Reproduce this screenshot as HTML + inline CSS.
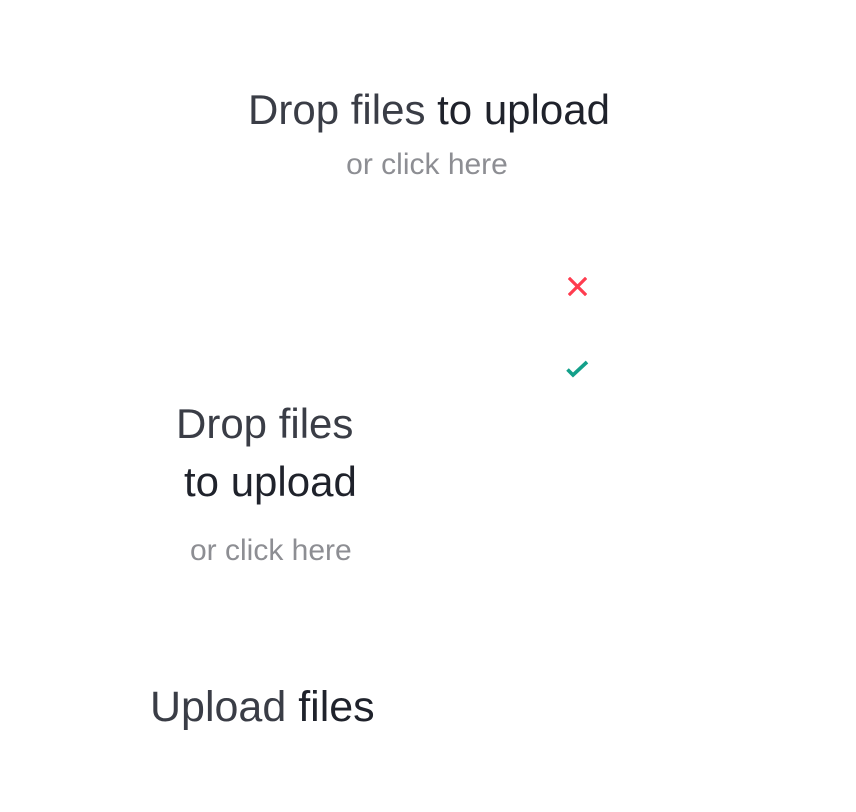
<!DOCTYPE html>
<html><head><meta charset="utf-8"><style>
html,body{margin:0;padding:0;background:#fff;width:856px;height:812px;overflow:hidden;position:relative;font-family:"Liberation Sans",Arial,sans-serif}
.t{position:absolute;line-height:1;white-space:nowrap;color:#2b2e37}
.l{font-weight:normal;color:#3a3d46}
.b{color:#1f222b}
.g{color:#8d8e93}
</style></head><body>
<div class="t" style="top:89px;left:0;width:858px;text-align:center;font-size:42px"><span class="l">Drop files</span> <span class="b">to upload</span></div>
<div class="t g" style="top:150px;left:0;width:854px;text-align:center;font-size:30px">or click here</div>

<svg style="position:absolute;left:568px;top:277px" width="19" height="19" viewBox="0 0 19 19"><path d="M2 2L17 17M17 2L2 17" stroke="#ff3c4f" stroke-width="3.2" stroke-linecap="square"/></svg>
<svg style="position:absolute;left:565px;top:357px" width="25" height="22" viewBox="0 0 25 22"><path d="M2.5 12.5L8 18L22 5" fill="none" stroke="#13a08a" stroke-width="3.6"/></svg>

<div class="t l" style="top:403px;left:176px;font-size:42px">Drop files</div>
<div class="t b" style="top:461px;left:184px;font-size:42px">to upload</div>
<div class="t g" style="top:536px;left:190px;font-size:30px">or click here</div>
<div class="t" style="top:686px;left:150px;font-size:43px"><span class="l">Upload</span> <span class="b">files</span></div>
</body></html>
